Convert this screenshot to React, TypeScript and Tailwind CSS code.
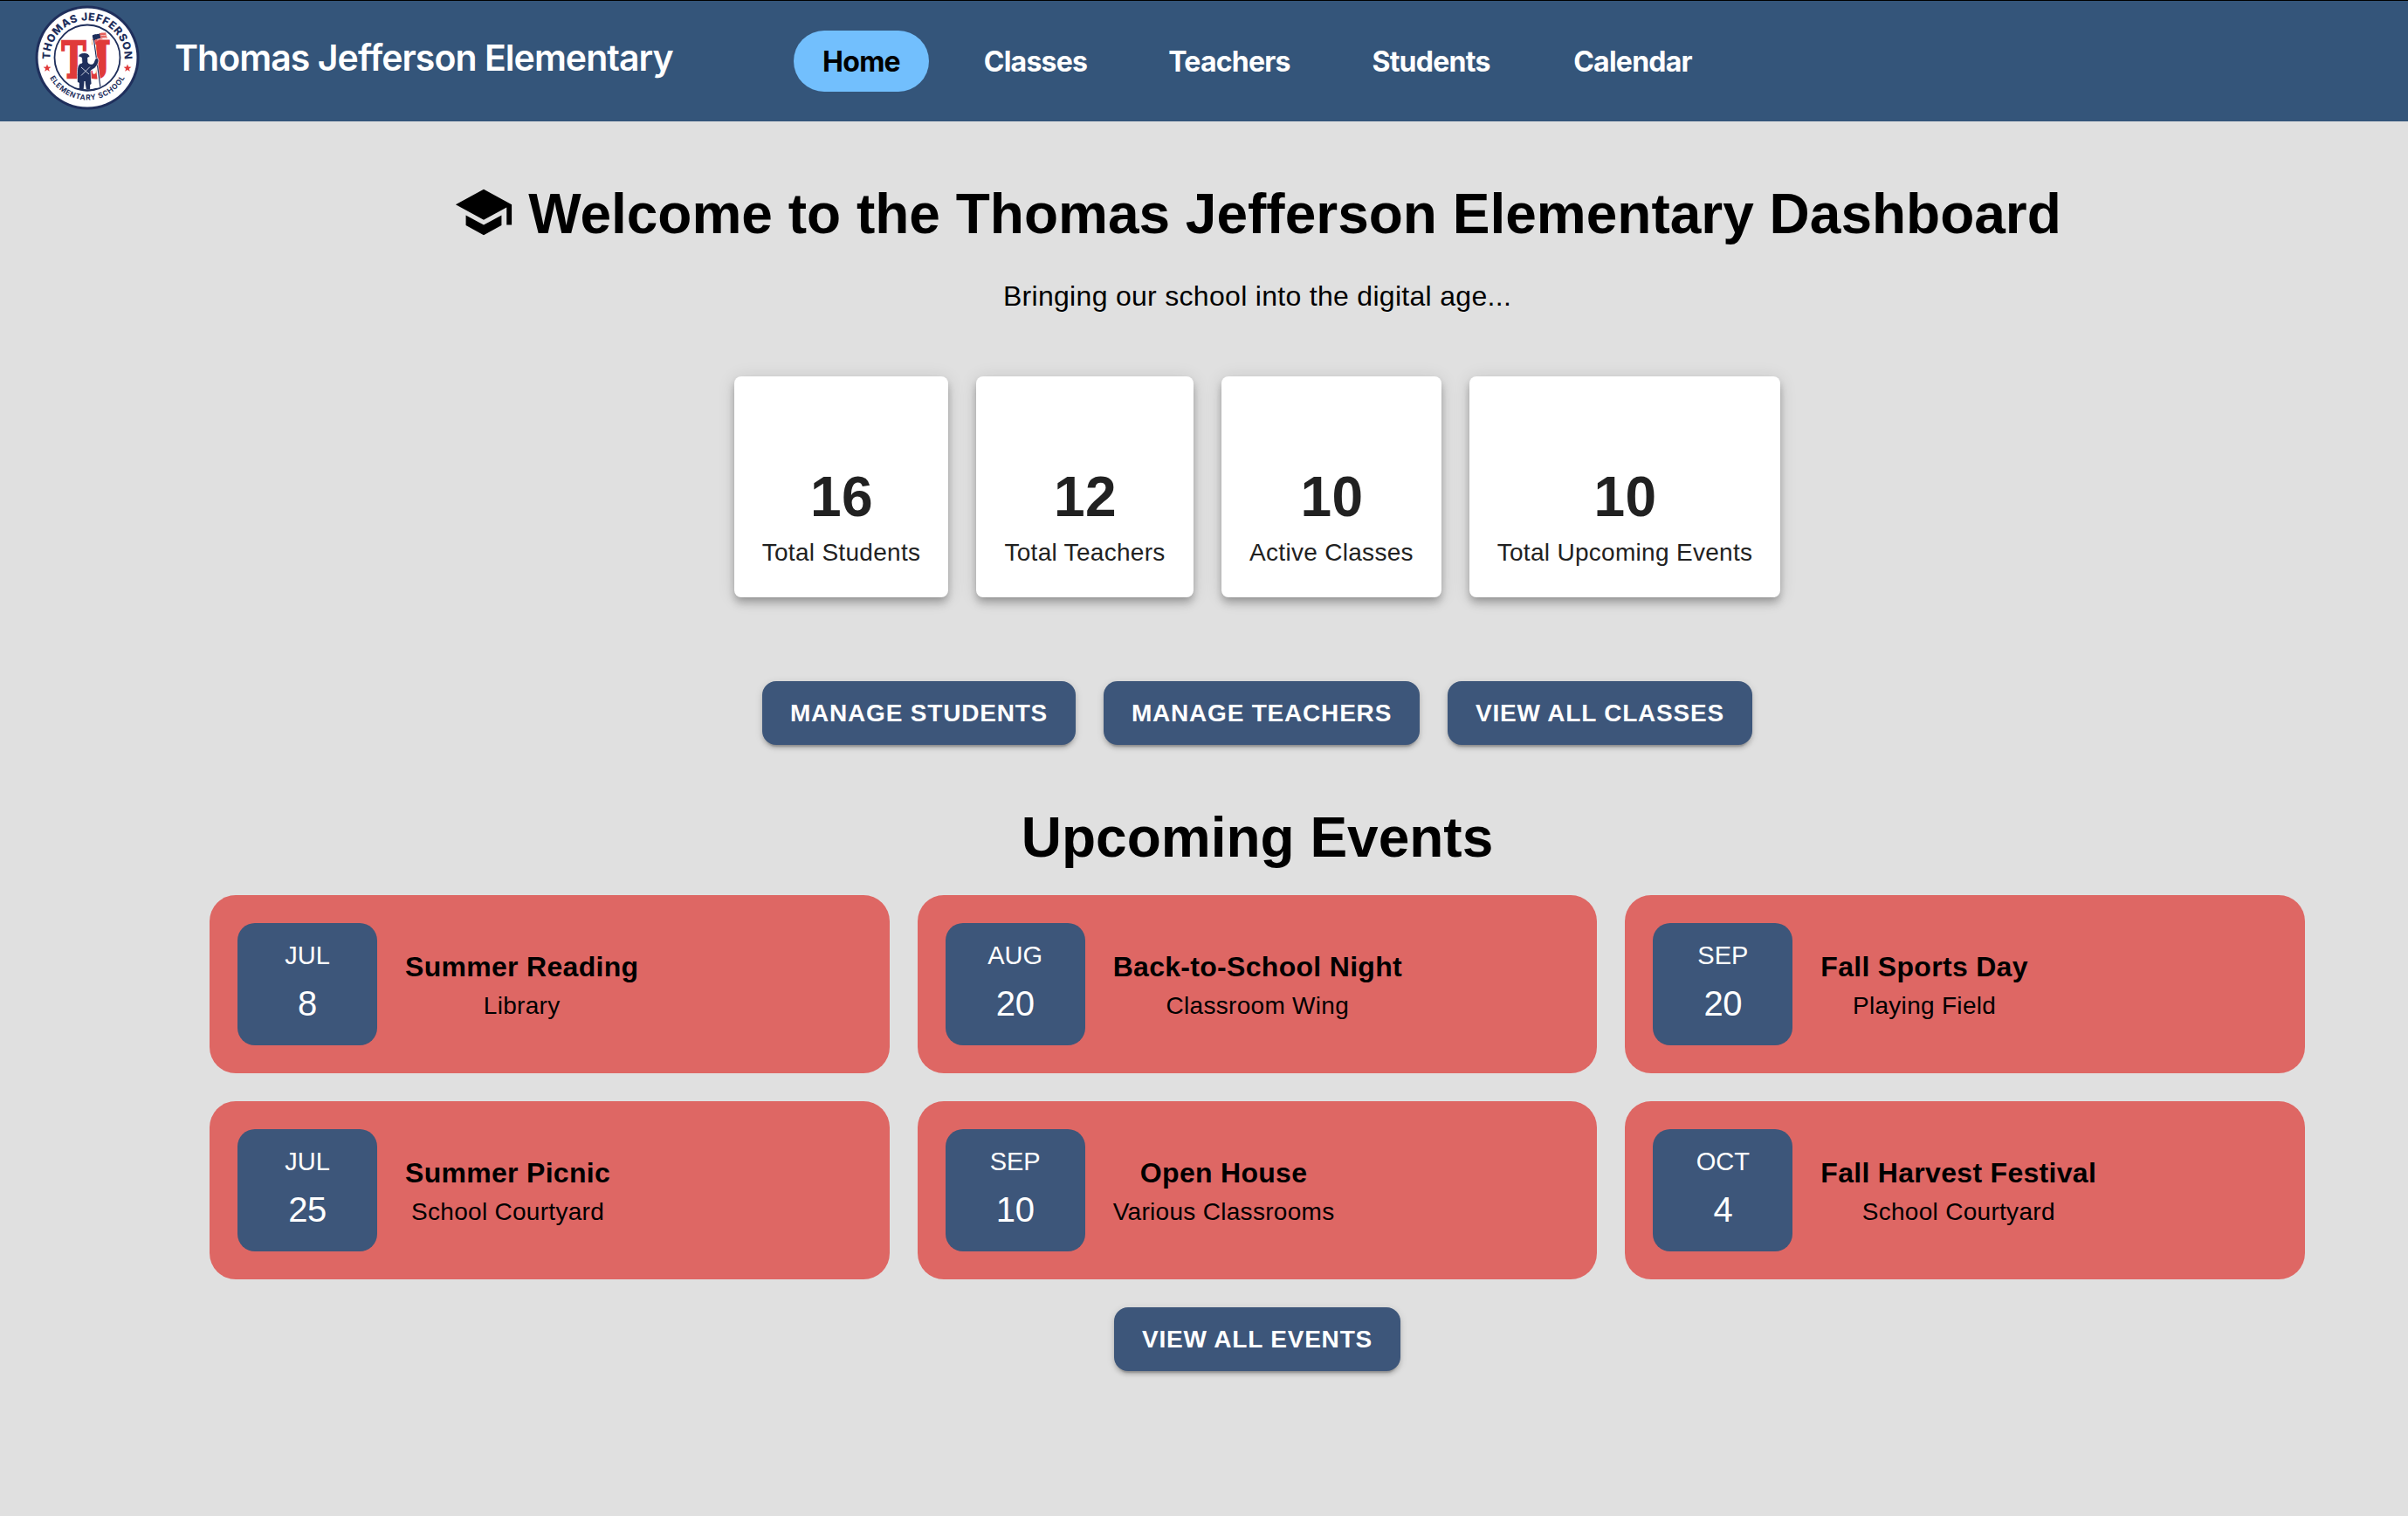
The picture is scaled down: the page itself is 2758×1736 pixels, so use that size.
const NAV = [
  { label: 'Home', width: 'w-[155px]', active: true },
  { label: 'Classes', width: 'w-[184px]' },
  { label: 'Teachers', width: 'w-[200px]' },
  { label: 'Students', width: 'w-[202px]' },
  { label: 'Calendar', width: 'w-[200px]' },
];

const STATS = [
  { value: 16, label: 'Total Students', width: 'w-[245px]' },
  { value: 12, label: 'Total Teachers', width: 'w-[249px]' },
  { value: 10, label: 'Active Classes', width: 'w-[252px]' },
  { value: 10, label: 'Total Upcoming Events', width: 'w-[356px]' },
];

const EVENTS = [
  { month: 'JUL', day: 8, title: 'Summer Reading', place: 'Library' },
  { month: 'AUG', day: 20, title: 'Back-to-School Night', place: 'Classroom Wing' },
  { month: 'SEP', day: 20, title: 'Fall Sports Day', place: 'Playing Field' },
  { month: 'JUL', day: 25, title: 'Summer Picnic', place: 'School Courtyard' },
  { month: 'SEP', day: 10, title: 'Open House', place: 'Various Classrooms' },
  { month: 'OCT', day: 4, title: 'Fall Harvest Festival', place: 'School Courtyard' },
];

function Logo() {
  return (
    <svg viewBox="0 0 120 120" className="size-[120px] shrink-0" aria-label="Thomas Jefferson Elementary School">
      <defs>
        <path id="arc-top" d="M 17.5 64 A 42.69 42.69 0 1 1 102.5 64" />
        <path id="arc-bottom" d="M 11.6 66 A 48.8 48.8 0 0 0 108.4 66" />
      </defs>
      <circle cx="60" cy="60" r="59.5" fill="#1f2f5c" />
      <circle cx="60" cy="60" r="56.500" fill="#fff" />
      <circle cx="60" cy="60" r="37.5" fill="#fff" stroke="#1f2f5c" strokeWidth="1.8" />
      <text fill="#1f2f5c" fontFamily="Inter, sans-serif" fontWeight="800" fontSize="12.2">
        <textPath href="#arc-top" startOffset="50%" textAnchor="middle" textLength="138">THOMAS JEFFERSON</textPath>
      </text>
      <text fill="#1f2f5c" fontFamily="Inter, sans-serif" fontWeight="700" fontSize="8.4">
        <textPath href="#arc-bottom" startOffset="50%" textAnchor="middle" textLength="105">ELEMENTARY SCHOOL</textPath>
      </text>
      <path fill="#e03a3a" d="M14 67.500l1.200 3 3.200.2-2.500 2 .9 3.100-2.800-1.700-2.800 1.700.9-3.100-2.500-2 3.200-.2z" />
      <path fill="#e03a3a" d="M106 67.500l1.200 3 3.200.2-2.500 2 .9 3.100-2.800-1.700-2.800 1.700.9-3.100-2.500-2 3.200-.2z" />
      <g fill="#e03a3a" fontFamily="DejaVu Serif, serif" fontWeight="700" stroke="#e03a3a" strokeWidth="2.4">
        <text x="30.5" y="82.7" fontSize="57" textLength="28" lengthAdjust="spacingAndGlyphs">T</text>
        <text x="65" y="74" fontSize="45" strokeWidth="3" textLength="21" lengthAdjust="spacingAndGlyphs">J</text>
      </g>
      <path d="M67 40 74.500 94" stroke="#fff" strokeWidth="3.2" />
      <path d="M66.700 34 75 94" stroke="#1f2f5c" strokeWidth="1.2" />
      <path d="M65.700 35c3-3 6-1 9-3l1 5.500c-3 2-5 0-8.500 3.500z" fill="#1f2f5c" />
      <path d="M74 32.500c3-2 5 0 7-1.500l1.800 7c-4-1-8 1-14 5l-.5-2.500c3-2 5-2 7-3z" fill="#e4605d" />
      <path d="M75 35c2.500-1 4.500 0 6.500-.8M71 40c4-2 7-3 11-3" stroke="#fff" strokeWidth=".6" fill="none" />
      <path
        d="M49.500 58.500c1-2.500 3.500-4 7-4 3.500 0 5.500 1.500 6.500 4.500l-2.500 1c.5 3-.5 5 1 6.500 2 1 4 1.500 5.500 0l2-5 2.500-1.500 1.500 3c-.5 5-3.500 9-7 10.500l-2 1.500.5 10 .5 5-1.500 1v6h-5l-1.500-10-1 10h-5.500v-8l-2-1c0-8-.5-15 1-18.500 1-2.500 3-3 4.500-3.500l-.5-6z"
        fill="#1f2f5c"
        stroke="#fff"
        strokeWidth=".7"
      />
      <path d="M53 71l9 8M63 70.500l-10 10" stroke="#c5cbda" strokeWidth="1" />
      <path d="M49 95.700q11 3.600 22 0" stroke="#1f2f5c" strokeWidth="1.800" fill="none" />
    </svg>
  );
}

function SchoolIcon() {
  return (
    <svg viewBox="0 0 24 24" fill="currentColor" className="size-[70px] shrink-0">
      <path d="M5 13.180v4L12 21l7-3.820v-4L12 17zM12 3 1 9l11 6 9-4.910V17h2V9z" />
    </svg>
  );
}

function Button({ children, width }: { children: string; width: string }) {
  return (
    <button
      className={`${width} h-[73px] rounded-2xl bg-[#3d567a] text-[28px] leading-[49px] font-bold tracking-[0.8px] whitespace-nowrap text-white shadow-[0_6px_2px_-4px_rgba(0,0,0,0.2),0_4px_4px_0_rgba(0,0,0,0.14),0_2px_10px_0_rgba(0,0,0,0.12)]`}
    >
      {children}
    </button>
  );
}

export default function App() {
  return (
    <div className="h-[1736px] w-[2758px] overflow-hidden bg-[#e0e0e0] font-['Liberation_Sans',Arial,sans-serif] text-black">
      <header className="flex h-[139px] border-t border-black bg-[#34557a] font-['Inter',sans-serif] text-white">
        <div className="mt-[5px] ml-10">
          <Logo />
        </div>
        <div className="mt-[41px] ml-10 w-[708px] text-[41px] leading-[48px] font-semibold tracking-[-0.95px] whitespace-nowrap">
          Thomas Jefferson Elementary
        </div>
        <nav className="mt-[34px] ml-px flex gap-[30px] text-[32px] leading-[72px] font-bold tracking-[-0.75px]">
          {NAV.map((n) => (
            <a
              key={n.label}
              className={`${n.width} h-[70px] rounded-full text-center ${n.active ? 'bg-[#72bffd] text-black' : ''}`}
            >
              {n.label}
            </a>
          ))}
        </nav>
      </header>

      <main className="ml-[240px] flex w-[2400px] flex-col items-center">
        <h1 className="mt-[69px] flex h-[70px] items-center gap-4 text-[64px] leading-[70px] font-bold whitespace-nowrap">
          <SchoolIcon />
          <span className="pt-[3px]">Welcome to the Thomas Jefferson Elementary Dashboard</span>
        </h1>
        <p className="mt-[37px] text-[32px] leading-[48px] tracking-[0.3px]">Bringing our school into the digital age...</p>

        <section className="mt-[68px] flex gap-8">
          {STATS.map((s) => (
            <div
              key={s.label}
              className={`${s.width} flex h-[253px] flex-col items-center rounded-lg bg-white pt-[100px] text-[#212121] shadow-[0_4px_8px_-2px_rgba(0,0,0,0.2),0_8px_10px_0_rgba(0,0,0,0.14),0_2px_20px_0_rgba(0,0,0,0.12)]`}
            >
              <div className="pl-px text-[64px] leading-[76px] font-bold tracking-[0.5px]">{s.value}</div>
              <div className="mt-1.5 text-[28px] leading-10 tracking-[0.3px] whitespace-nowrap">{s.label}</div>
            </div>
          ))}
        </section>

        <section className="mt-24 flex gap-8">
          <Button width="w-[359px]">MANAGE STUDENTS</Button>
          <Button width="w-[362px]">MANAGE TEACHERS</Button>
          <Button width="w-[349px]">VIEW ALL CLASSES</Button>
        </section>

        <h2 className="mt-[68px] text-[64px] leading-[76px] font-bold">Upcoming Events</h2>

        <section className="mt-7 grid w-full grid-cols-3 gap-8">
          {EVENTS.map((e) => (
            <article key={e.title} className="flex h-[204px] items-center gap-8 rounded-[30px] bg-[#de6764] px-8">
              <div className="flex h-[140px] w-40 flex-col items-center rounded-[20px] bg-[#3d567a] pt-[17px] text-white">
                <div className="text-[29px] leading-10">{e.month}</div>
                <div className="mt-[7px] text-[40px] leading-[56px] tracking-[-0.4px]">{e.day}</div>
              </div>
              <div className="flex flex-col items-center">
                <div className="text-[32px] leading-[48px] font-bold tracking-[0.3px]">{e.title}</div>
                <div className="pt-px text-[28px] leading-10 tracking-[0.3px]">{e.place}</div>
              </div>
            </article>
          ))}
        </section>

        <div className="mt-8">
          <Button width="w-[328px]">VIEW ALL EVENTS</Button>
        </div>
      </main>
    </div>
  );
}
